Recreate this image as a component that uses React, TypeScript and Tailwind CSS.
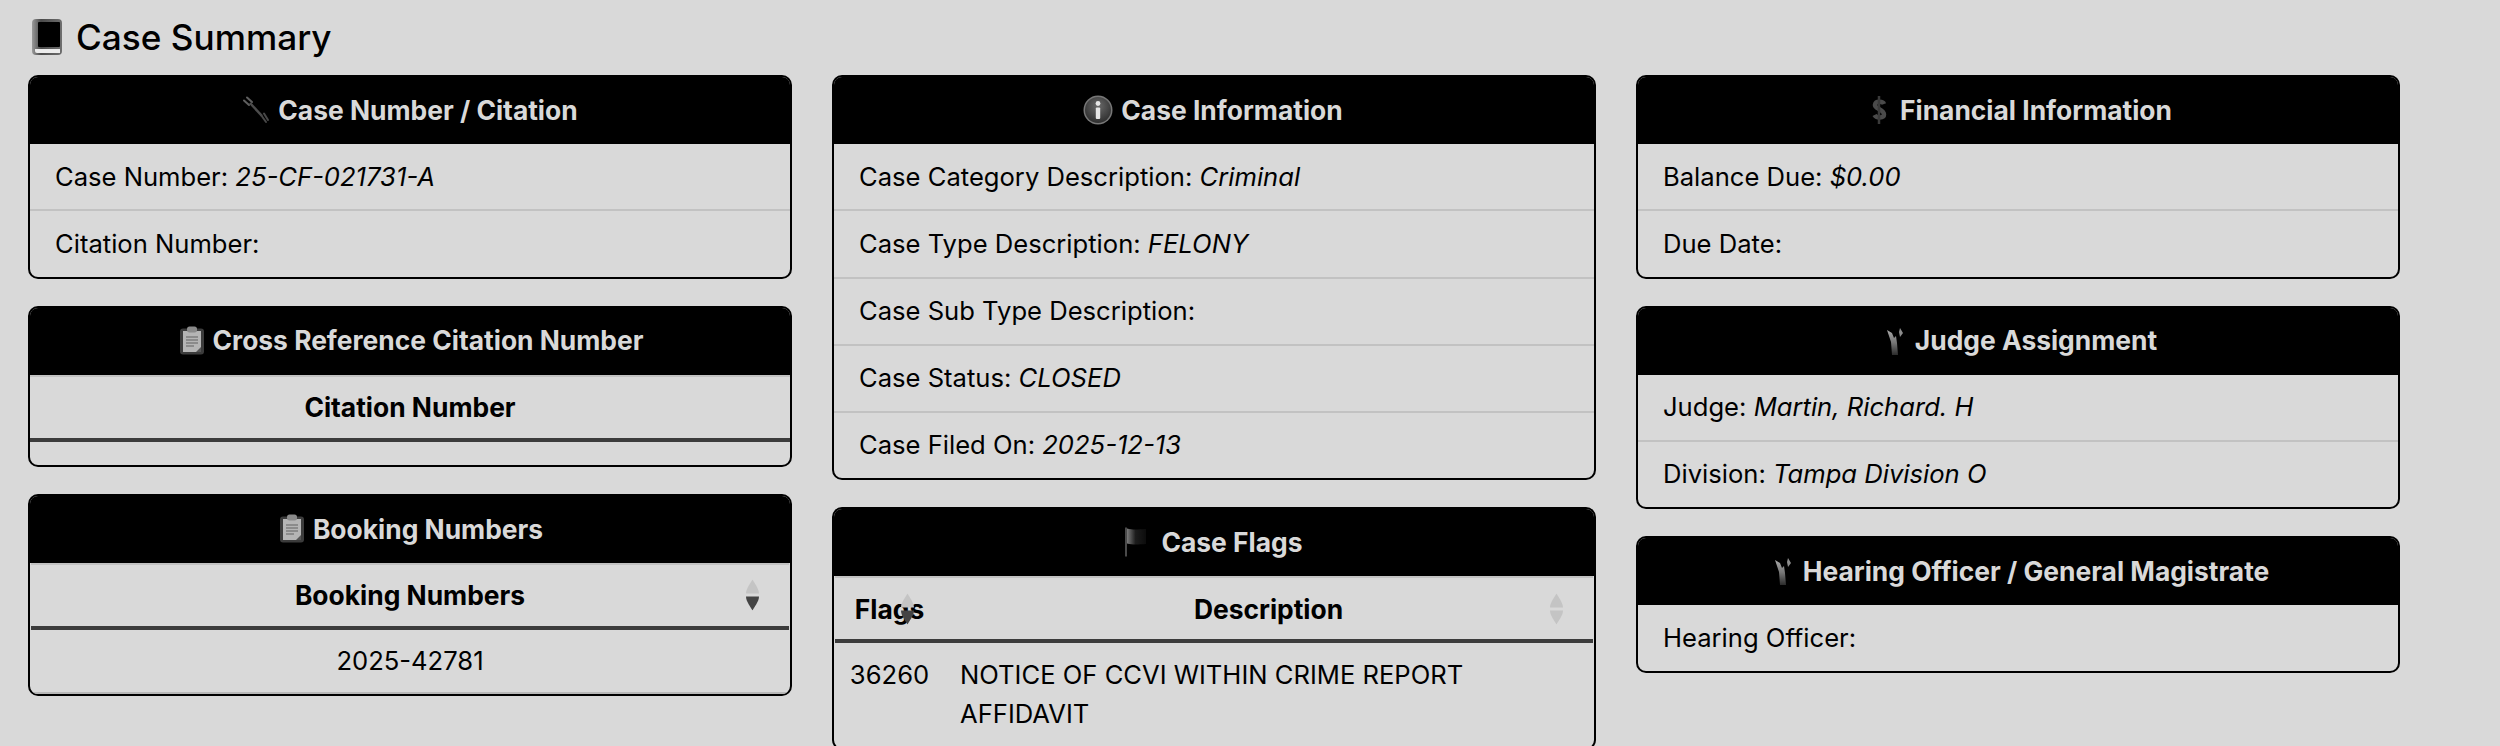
import type { ReactNode } from 'react';

const BookIcon = () => (
  <svg width="34" height="38" viewBox="0 0 34 38" className="shrink-0">
    <defs>
      <linearGradient id="bookSide" x1="0" x2="1" y1="0" y2="0">
        <stop offset="0" stopColor="#9a9a9a" />
        <stop offset="0.3" stopColor="#4a4a4a" />
        <stop offset="1" stopColor="#6e6e6e" />
      </linearGradient>
    </defs>
    <rect x="2" y="1" width="30" height="36" rx="4" fill="url(#bookSide)" />
    <rect x="8" y="4" width="22" height="25" rx="1" fill="#000" />
    <path d="M5 31h25v4H7a2 2 0 0 1-2-2z" fill="#ececec" />
  </svg>
);

const WrenchIcon = () => (
  <svg width="30" height="30" viewBox="0 0 30 30" className="shrink-0">
    <path d="M8 8L20 21" stroke="#4c4c4c" strokeWidth="2.500" />
    <path d="M2 5.500L7 10M5 2.500L10 7" stroke="#5e5e5e" strokeWidth="2" strokeLinecap="round" />
    <path d="M19 20L24 27M22 18.500L26 25" stroke="#484848" strokeWidth="2" strokeLinecap="round" />
  </svg>
);

const ClipboardIcon = () => (
  <svg width="30" height="30" viewBox="0 0 30 30" className="shrink-0">
    <rect x="3" y="2.500" width="24" height="26" rx="3" fill="#3c3c3c" />
    <rect x="6" y="5" width="18" height="21" fill="#b5b5b5" />
    <path d="M9 11h12M9 14h12M9 17h12M9 20h8" stroke="#7e7e7e" strokeWidth="1.400" />
    <path d="M19 26l5-5v5z" fill="#555" />
    <rect x="10" y="0.500" width="10" height="6" rx="2.500" fill="#8a8a8a" />
  </svg>
);

const InfoIcon = () => (
  <svg width="30" height="30" viewBox="0 0 30 30" className="shrink-0 -ml-[2px] mr-[2px]">
    <defs>
      <radialGradient id="infoFill" cx="0.5" cy="0.35" r="0.7">
        <stop offset="0" stopColor="#6a6a6a" />
        <stop offset="1" stopColor="#2a2a2a" />
      </radialGradient>
    </defs>
    <circle cx="15" cy="15" r="14.500" fill="#777" />
    <circle cx="15" cy="15" r="13" fill="url(#infoFill)" />
    <circle cx="15" cy="8.500" r="2.400" fill="#e6e6e6" />
    <rect x="12.800" y="12.500" width="4.400" height="11.500" rx="1" fill="#e6e6e6" />
  </svg>
);

const DollarIcon = () => (
  <svg width="30" height="30" viewBox="0 0 30 30" className="shrink-0">
    <path
      d="M20 9c-1-2.500-8-3.500-9 .5-1 4.500 9 4.500 9 10 0 4-8 3.500-9.500 .5"
      fill="none"
      stroke="#4a4a4a"
      strokeWidth="4.500"
    />
    <path d="M15 1v28" stroke="#3a3a3a" strokeWidth="2.500" />
  </svg>
);

const FlagIcon = () => (
  <svg width="30" height="30" viewBox="0 0 30 30" className="shrink-0 -translate-x-[1px]">
    <defs>
      <linearGradient id="flagShade" x1="0" x2="1" y1="0" y2="0">
        <stop offset="0" stopColor="#7c7c7c" />
        <stop offset="0.45" stopColor="#1c1c1c" />
        <stop offset="1" stopColor="#0c0c0c" />
      </linearGradient>
    </defs>
    <rect x="1" y="0.500" width="2" height="29" fill="#4a4a4a" />
    <path d="M3 1.500c6 1.500 10 1 19 .5v15c-8 .5-13 1-19-.5z" fill="url(#flagShade)" />
  </svg>
);

const GavelIcon = () => (
  <svg width="30" height="30" viewBox="0 0 30 30" className="shrink-0">
    <defs>
      <linearGradient id="gavelFade" x1="0" x2="0" y1="0" y2="1">
        <stop offset="0" stopColor="#a8a8a8" />
        <stop offset="0.5" stopColor="#777" />
        <stop offset="1" stopColor="#2c2c2c" />
      </linearGradient>
    </defs>
    <path d="M8 4l5 3 2 5 2-2 1 7 1 12h-6l-1-13z" fill="url(#gavelFade)" />
    <path d="M21 2l3 5-3 4-1-5z" fill="#8c8c8c" />
  </svg>
);

const SortArrows = ({ up, down }: { up: string; down: string }) => (
  <svg
    width="13"
    height="31"
    viewBox="0 0 13 31"
    className="absolute right-[30px] top-1/2 -translate-y-1/2"
  >
    <path d="M6.500 0C8 3 13 9 13 14H0C0 9 5 3 6.500 0Z" fill={up} />
    <path d="M6.500 31C8 28 13 22 13 17H0C0 22 5 28 6.500 31Z" fill={down} />
  </svg>
);

function Card({ icon, title, children }: { icon: ReactNode; title: string; children: ReactNode }) {
  return (
    <section className="border-2 border-black rounded-[10px] overflow-hidden">
      <h3 className="h-[67.2px] pb-px bg-black flex items-center justify-center gap-[6px] text-[26.4px] font-bold text-[#d9d9d9]">
        {icon}
        <span>{title}</span>
      </h3>
      {children}
    </section>
  );
}

function Row({ label, value, last }: { label: string; value?: string; last?: boolean }) {
  return (
    <div
      className={`h-[65.2px] px-[25px] flex items-center whitespace-pre ${
        last ? '' : 'box-content border-b-2 border-[#c2c2c2]'
      }`}
    >
      <span>{label}: </span>
      {value && <em>{value}</em>}
    </div>
  );
}

const thClass =
  'relative h-[67px] border-t-2 border-t-[#c2c2c2] border-b-4 border-b-[#3c3c3c] font-bold text-[26.4px] text-center';

export default function App() {
  return (
    <div className="h-screen overflow-hidden bg-[#d9d9d9] text-black text-[25.6px] leading-[38.4px] font-['Inter','Noto_Sans',sans-serif]">
      <div className="h-[75px] pl-[30px] flex items-center gap-[12px] pb-[1px]">
        <BookIcon />
        <h1 className="text-[35.2px] font-medium">Case Summary</h1>
      </div>

      <div className="pl-[28px] grid grid-cols-[764px_764px_764px] gap-x-[40px] items-start">
        <div className="flex flex-col gap-[27px]">
          <Card icon={<WrenchIcon />} title="Case Number / Citation">
            <Row label="Case Number" value="25-CF-021731-A" />
            <Row label="Citation Number" last />
          </Card>

          <Card icon={<ClipboardIcon />} title="Cross Reference Citation Number">
            <table className="w-full border-separate border-spacing-0">
              <thead>
                <tr>
                  <th className={thClass}>Citation Number</th>
                </tr>
              </thead>
              <tbody>
                <tr>
                  <td className="h-[23px]" />
                </tr>
              </tbody>
            </table>
          </Card>

          <Card icon={<ClipboardIcon />} title="Booking Numbers">
            <div className="px-px">
              <table className="w-full border-separate border-spacing-0">
                <thead>
                  <tr>
                    <th className={thClass}>
                      Booking Numbers
                      <SortArrows up="#c4c4c4" down="#444444" />
                    </th>
                  </tr>
                </thead>
                <tbody>
                  <tr>
                    <td className="h-[64px] text-center border-b-2 border-[#b8b8b8]">2025-42781</td>
                  </tr>
                </tbody>
              </table>
            </div>
          </Card>
        </div>

        <div className="flex flex-col gap-[27px]">
          <Card icon={<InfoIcon />} title="Case Information">
            <Row label="Case Category Description" value="Criminal" />
            <Row label="Case Type Description" value="FELONY" />
            <Row label="Case Sub Type Description" />
            <Row label="Case Status" value="CLOSED" />
            <Row label="Case Filed On" value="2025-12-13" last />
          </Card>

          <Card icon={<FlagIcon />} title="Case Flags">
            <div className="px-px">
              <table className="w-full border-separate border-spacing-0 table-fixed">
                <thead>
                  <tr>
                    <th className={`${thClass} w-[109px]`}>
                      Flags
                      <SortArrows up="#c4c4c4" down="#444444" />
                    </th>
                    <th className={thClass}>
                      Description
                      <SortArrows up="#c4c4c4" down="#c4c4c4" />
                    </th>
                  </tr>
                </thead>
                <tbody>
                  <tr>
                    <td className="py-[12.8px] text-center align-top border-b-2 border-[#b8b8b8]">36260</td>
                    <td className="py-[12.8px] pl-[16px] pr-[16px] align-top border-b-2 border-[#b8b8b8]">
                      NOTICE OF CCVI WITHIN CRIME REPORT AFFIDAVIT
                    </td>
                  </tr>
                </tbody>
              </table>
            </div>
          </Card>
        </div>

        <div className="flex flex-col gap-[27px]">
          <Card icon={<DollarIcon />} title="Financial Information">
            <Row label="Balance Due" value="$0.00" />
            <Row label="Due Date" last />
          </Card>

          <Card icon={<GavelIcon />} title="Judge Assignment">
            <Row label="Judge" value="Martin, Richard. H" />
            <Row label="Division" value="Tampa Division O" last />
          </Card>

          <Card icon={<GavelIcon />} title="Hearing Officer / General Magistrate">
            <Row label="Hearing Officer" last />
          </Card>
        </div>
      </div>
    </div>
  );
}
